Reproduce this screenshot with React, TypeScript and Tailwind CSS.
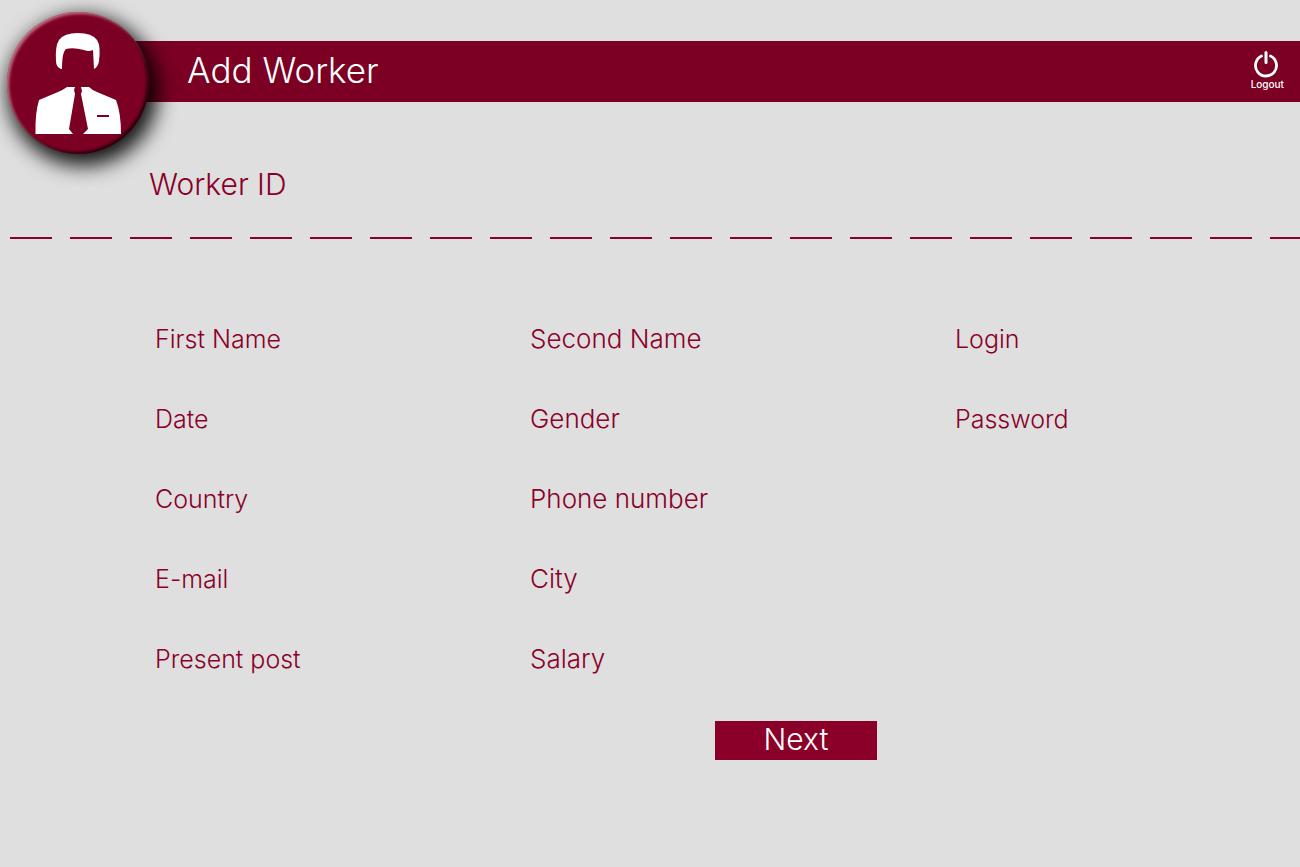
const columns = [
  { id: "identity", size: "text-[25px]", fields: ["First Name", "Date", "Country", "E-mail", "Present post"] },
  { id: "contact", size: "text-[26px]", fields: ["Second Name", "Gender", "Phone number", "City", "Salary"] },
  { id: "account", size: "text-[25px]", fields: ["Login", "Password"] },
];

function WorkerBadge() {
  return (
    <div className="absolute -left-[71px] -top-[29px] size-[142px] rounded-full bg-[#7b0023] shadow-[5px_8px_20px_4px_rgba(0,0,0,0.9),inset_2px_2px_3px_rgba(255,200,215,0.55),inset_-2px_-2px_3px_rgba(0,0,0,0.7)]">
      <svg viewBox="0 0 142 142" className="size-full" aria-hidden="true">
        <g fill="#fff">
          <path d="M54 57 Q49 55 49 49 Q48 34 52 28 Q57 21 71 21 Q85 21 90 28 Q94 34 92 49 Q91 55 87 57 L86 38 Q82 40 77 38 Q66 35 59 37 Q55 40 55 57 Z" />
          <path d="M28.500 122 Q28 101 32 88 L51 80 Q56 78 60 75 H68 L67 78 L68 82 L62 117 L66 122 Z" />
          <path d="M76 122 L81 117 L74 82 L75 79 L74 75 H82 Q85 78 90 80 L109 88 Q114 101 114 122 Z" />
        </g>
        <rect x="90" y="103" width="12" height="2" fill="#7b0023" />
      </svg>
    </div>
  );
}

export default function App() {
  return (
    <div className="min-h-screen overflow-x-hidden bg-[#dfdfdf] pt-[41px] font-['Inter',sans-serif] font-light text-[#8b0029]">
      <header className="relative ml-[78px] flex h-[61px] items-center justify-between bg-[#7b0023] pr-4 pl-[109px] text-white">
        <WorkerBadge />
        <h1 className="pb-1 text-[35px] leading-10">Add Worker</h1>
        <button type="button" className="flex flex-col items-center pb-1 text-[10px] leading-3 font-medium">
          <svg viewBox="0 0 28 28" className="size-7" fill="none" stroke="currentColor" aria-hidden="true">
            <path d="M8.500 6 A10.500 10.500 0 1 0 17.500 6" strokeWidth="2.800" strokeLinecap="round" />
            <path d="M13 2.500 V12.500" strokeWidth="3" strokeLinecap="round" />
          </svg>
          Logout
        </button>
      </header>

      <main>
        <h2 className="pt-[62px] pl-[149px] text-[30px] leading-10">Worker ID</h2>
        <div className="mt-[33px] ml-[10px] h-[2px] bg-[repeating-linear-gradient(90deg,#8b0029_0px_42px,transparent_42px_60px)]" />
        <section className="grid grid-cols-[375px_425px_1fr] pt-20 pl-[155px] leading-10">
          {columns.map(({ id, size, fields }) => (
            <ul key={id} className={`flex flex-col gap-10 ${size}`}>
              {fields.map((field) => (
                <li key={field}>{field}</li>
              ))}
            </ul>
          ))}
        </section>
        <button
          type="button"
          className="mt-[42px] ml-[55%] flex h-[39px] w-[162px] items-center justify-center bg-[#8b0029] pb-1 text-[30px] leading-9 text-white"
        >
          Next
        </button>
      </main>
    </div>
  );
}
